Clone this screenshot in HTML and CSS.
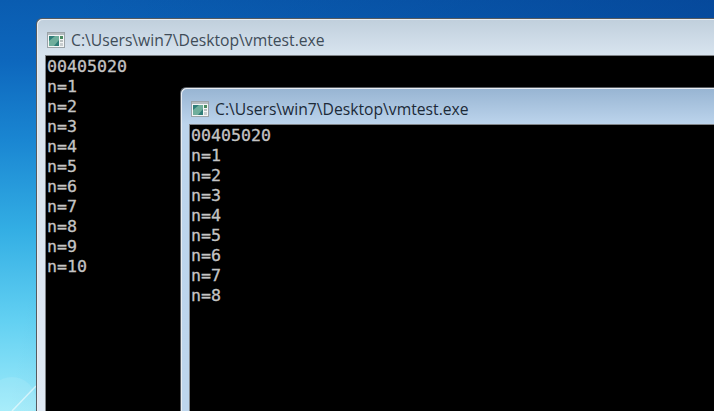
FILE: index.html
```html
<!DOCTYPE html>
<html lang="en">
<head>
<meta charset="utf-8">
<title>vmtest.exe</title>
<link rel="stylesheet" href="styles.css">
</head>
<body>
<main class="desktop">
  <svg class="streak" width="60" height="60" viewBox="0 0 60 60" aria-hidden="true">
    <circle cx="12" cy="50" r="24" fill="#fff" opacity=".1"/>
    <path d="M12 60 L36 35" stroke="#fff" stroke-width="1.5" opacity=".55"/>
  </svg>
  <section class="window window-back">
    <header class="titlebar">
      <svg class="appicon" width="18" height="16" viewBox="0 0 18 16" aria-hidden="true">
        <rect x=".5" y=".5" width="17" height="15" fill="#f4f6f6" stroke="#9aa3a8"/>
        <rect x="1" y="1" width="16" height="2" fill="#b5bcc0"/>
        <rect x="2" y="4" width="10" height="10" fill="#2f7d78"/>
        <path d="M2 14 V9 L8 4 H12 V8 L7 14 Z" fill="#6fae9c"/>
        <rect x="13" y="4" width="3" height="3" fill="#4a8a60"/>
        <rect x="13" y="8" width="3" height="2" fill="#b8bfc0"/>
        <rect x="13" y="11" width="3" height="3" fill="#c8ced0"/>
      </svg>
      <span class="title">C:\Users\win7\Desktop\vmtest.exe</span>
    </header>
    <pre class="console">00405020
n=1
n=2
n=3
n=4
n=5
n=6
n=7
n=8
n=9
n=10</pre>
  </section>
  <section class="window window-front">
    <header class="titlebar">
      <svg class="appicon" width="18" height="16" viewBox="0 0 18 16" aria-hidden="true">
        <rect x=".5" y=".5" width="17" height="15" fill="#f4f6f6" stroke="#9aa3a8"/>
        <rect x="1" y="1" width="16" height="2" fill="#b5bcc0"/>
        <rect x="2" y="4" width="10" height="10" fill="#2f7d78"/>
        <path d="M2 14 V9 L8 4 H12 V8 L7 14 Z" fill="#6fae9c"/>
        <rect x="13" y="4" width="3" height="3" fill="#4a8a60"/>
        <rect x="13" y="8" width="3" height="2" fill="#b8bfc0"/>
        <rect x="13" y="11" width="3" height="3" fill="#c8ced0"/>
      </svg>
      <span class="title">C:\Users\win7\Desktop\vmtest.exe</span>
    </header>
    <pre class="console">00405020
n=1
n=2
n=3
n=4
n=5
n=6
n=7
n=8</pre>
  </section>
</main>
</body>
</html>
```
FILE: styles.css
```css
html, body {
  margin: 0;
  height: 100%;
  overflow: hidden;
}

.desktop {
  position: relative;
  width: 714px;
  height: 411px;
  overflow: hidden;
  background:
    linear-gradient(100deg, rgba(0, 40, 130, 0) 10%, rgba(0, 50, 130, .5) 100%),
    linear-gradient(180deg, #0a5cb0 0, #0d67bd 60px, #1a86d2 140px, #33aee4 230px, #62d0f2 320px, #9eebfa 411px);
}

.streak {
  position: absolute;
  left: 0;
  top: 351px;
}

.window {
  position: absolute;
  display: flex;
  flex-direction: column;
  box-sizing: border-box;
  border: 1px solid #555a60;
  border-right: 0;
  border-bottom: 0;
  border-top-left-radius: 6px;
  box-shadow: inset 1px 1px 0 #e8edf2;
}

.window-back {
  left: 36px;
  top: 18px;
  width: 678px;
  height: 393px;
  padding-left: 8px;
  background: linear-gradient(180deg, #c0cfdc 0, #d8e4ef 36px, #dfe9f4 100%);
}

.window-front {
  left: 180px;
  top: 87px;
  width: 534px;
  height: 324px;
  padding-left: 8px;
  background: linear-gradient(180deg, #97b4d2 0, #bcd4ec 36px, #bdd5ec 100%);
}

.titlebar {
  display: flex;
  align-items: center;
  gap: 6px;
  flex: none;
  height: 36px;
  padding: 6px 0 0 2px;
  box-sizing: border-box;
}

.appicon {
  flex: none;
}

.title {
  font-family: "Open Sans", "Noto Sans", sans-serif;
  font-size: 15.7px;
  line-height: 18px;
  color: #1c2a38;
  white-space: nowrap;
}

.window-back .title {
  color: #3f4c58;
}

.console {
  flex: 1;
  margin: 0;
  padding: 1px 0 0 1px;
  background: #000;
  border-top: 1px solid #808488;
  border-left: 1px solid #808488;
  color: #c4c4c4;
  font-family: "DejaVu Sans Mono", monospace;
  font-size: 16.6px;
  line-height: 20px;
  -webkit-text-stroke: .3px #c4c4c4;
}
```
